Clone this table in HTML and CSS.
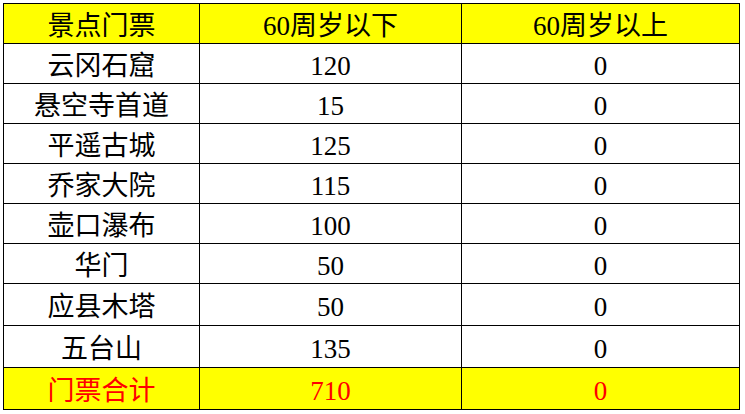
FILE: index.html
```html
<!DOCTYPE html>
<html lang="zh-CN">
<head>
<meta charset="utf-8">
<title>景点门票</title>
<link rel="stylesheet" href="styles.css">
</head>
<body>
<table class="tickets">
  <colgroup>
    <col class="c1"><col class="c2"><col class="c3">
  </colgroup>
  <thead>
    <tr class="head"><th>景点门票</th><th>60周岁以下</th><th>60周岁以上</th></tr>
  </thead>
  <tbody>
    <tr><td>云冈石窟</td><td>120</td><td>0</td></tr>
    <tr><td>悬空寺首道</td><td>15</td><td>0</td></tr>
    <tr><td>平遥古城</td><td>125</td><td>0</td></tr>
    <tr><td>乔家大院</td><td>115</td><td>0</td></tr>
    <tr><td>壶口瀑布</td><td>100</td><td>0</td></tr>
    <tr><td>华门</td><td>50</td><td>0</td></tr>
    <tr class="tall"><td>应县木塔</td><td>50</td><td>0</td></tr>
    <tr class="tall"><td>五台山</td><td>135</td><td>0</td></tr>
  </tbody>
  <tfoot>
    <tr class="total tall"><td>门票合计</td><td>710</td><td>0</td></tr>
  </tfoot>
</table>
</body>
</html>
```
FILE: styles.css
```css
html, body {
  margin: 0;
  padding: 0;
  background: #fff;
}
body {
  padding: 3px 0 0 3px;
}
.tickets {
  border-collapse: collapse;
  table-layout: fixed;
  width: 736px;
  font-family: "Liberation Serif", "Noto Sans CJK SC", serif;
  font-size: 27px;
  color: #000;
}
.c1 { width: 196px; }
.c2 { width: 262px; }
.c3 { width: 278px; }
.tickets th,
.tickets td {
  border: 1px solid #000;
  height: 39px;
  padding: 5px 0 0 0;
  box-sizing: border-box;
  text-align: center;
  vertical-align: middle;
  font-weight: normal;
  line-height: 30px;
  white-space: nowrap;
}
.tickets tr { height: 40px; }
.tickets tr.tall { height: 42px; }
.tickets tr.tall td { height: 42px; }
.head th { background: #ffff00; }
.total td { background: #ffff00; color: #ff0000; }
```
